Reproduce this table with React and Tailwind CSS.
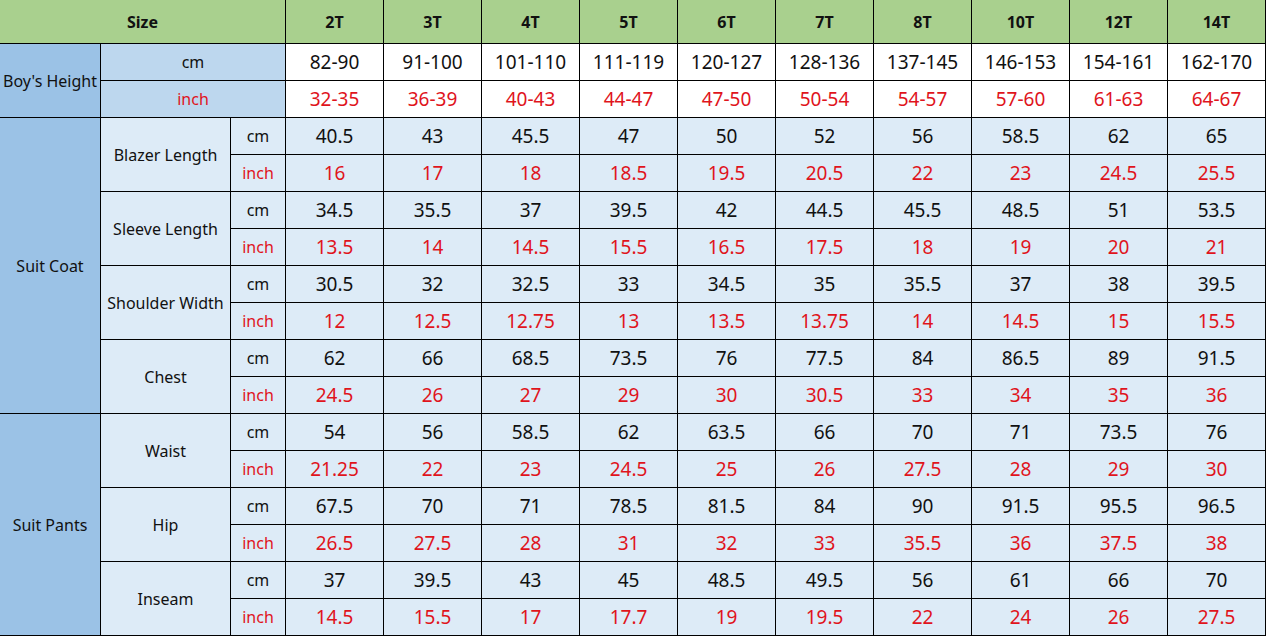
import React from 'react';

const sizes = ['2T', '3T', '4T', '5T', '6T', '7T', '8T', '10T', '12T', '14T'];

const heightCm = ['82-90', '91-100', '101-110', '111-119', '120-127', '128-136', '137-145', '146-153', '154-161', '162-170'];
const heightIn = ['32-35', '36-39', '40-43', '44-47', '47-50', '50-54', '54-57', '57-60', '61-63', '64-67'];

const coat = [
  { name: 'Blazer Length', cm: ['40.5', '43', '45.5', '47', '50', '52', '56', '58.5', '62', '65'], inch: ['16', '17', '18', '18.5', '19.5', '20.5', '22', '23', '24.5', '25.5'] },
  { name: 'Sleeve Length', cm: ['34.5', '35.5', '37', '39.5', '42', '44.5', '45.5', '48.5', '51', '53.5'], inch: ['13.5', '14', '14.5', '15.5', '16.5', '17.5', '18', '19', '20', '21'] },
  { name: 'Shoulder Width', cm: ['30.5', '32', '32.5', '33', '34.5', '35', '35.5', '37', '38', '39.5'], inch: ['12', '12.5', '12.75', '13', '13.5', '13.75', '14', '14.5', '15', '15.5'] },
  { name: 'Chest', cm: ['62', '66', '68.5', '73.5', '76', '77.5', '84', '86.5', '89', '91.5'], inch: ['24.5', '26', '27', '29', '30', '30.5', '33', '34', '35', '36'] },
];

const pants = [
  { name: 'Waist', cm: ['54', '56', '58.5', '62', '63.5', '66', '70', '71', '73.5', '76'], inch: ['21.25', '22', '23', '24.5', '25', '26', '27.5', '28', '29', '30'] },
  { name: 'Hip', cm: ['67.5', '70', '71', '78.5', '81.5', '84', '90', '91.5', '95.5', '96.5'], inch: ['26.5', '27.5', '28', '31', '32', '33', '35.5', '36', '37.5', '38'] },
  { name: 'Inseam', cm: ['37', '39.5', '43', '45', '48.5', '49.5', '56', '61', '66', '70'], inch: ['14.5', '15.5', '17', '17.7', '19', '19.5', '22', '24', '26', '27.5'] },
];

const cell = 'flex items-center justify-center';
const red = 'text-[#e0141c]';

const Group = ({ label, items }) => (
  <>
    <div
      className={`${cell} bg-[#9bc2e6] text-[16px] text-[#111]`}
      style={{ gridRow: `span ${items.length * 2}` }}
    >
      {label}
    </div>
    {items.map((m) => (
      <React.Fragment key={m.name}>
        <div className={`${cell} row-span-2 bg-[#ddebf7] text-[16px] text-[#111]`}>{m.name}</div>
        <div className={`${cell} bg-[#ddebf7] text-[16px] text-[#111]`}>cm</div>
        {m.cm.map((v, i) => (
          <div key={'c' + i} className={`${cell} bg-[#ddebf7] text-[19px] text-[#111]`}>{v}</div>
        ))}
        <div className={`${cell} bg-[#ddebf7] text-[16px] ${red}`}>inch</div>
        {m.inch.map((v, i) => (
          <div key={'i' + i} className={`${cell} bg-[#ddebf7] text-[19px] ${red}`}>{v}</div>
        ))}
      </React.Fragment>
    ))}
  </>
);

export default function App() {
  return (
    <div className="w-[1267px] h-[636px] bg-white" style={{ fontFamily: '"Noto Sans", "Open Sans", sans-serif' }}>
      <div className="grid w-[1266px] grid-cols-[100px_129px_54px_repeat(10,97px)] grid-rows-[43px_repeat(16,36px)] gap-px bg-black pr-px pb-px">
        {/* header */}
        <div className={`${cell} col-span-3 bg-[#a9d08e] text-[16px] font-bold text-[#111]`}>Size</div>
        {sizes.map((s) => (
          <div key={s} className={`${cell} bg-[#a9d08e] text-[16px] font-bold text-[#111]`}>{s}</div>
        ))}

        {/* boy's height */}
        <div className={`${cell} row-span-2 bg-[#9bc2e6] text-[16px] text-[#111] whitespace-nowrap`}>Boy's Height</div>
        <div className={`${cell} col-span-2 bg-[#bdd7ee] text-[16px] text-[#111]`}>cm</div>
        {heightCm.map((v) => (
          <div key={v} className={`${cell} bg-white text-[19px] text-[#111]`}>{v}</div>
        ))}
        <div className={`${cell} col-span-2 bg-[#bdd7ee] text-[16px] ${red}`}>inch</div>
        {heightIn.map((v) => (
          <div key={v} className={`${cell} bg-white text-[19px] ${red}`}>{v}</div>
        ))}

        <Group label="Suit Coat" items={coat} />
        <Group label="Suit Pants" items={pants} />
      </div>
    </div>
  );
}
